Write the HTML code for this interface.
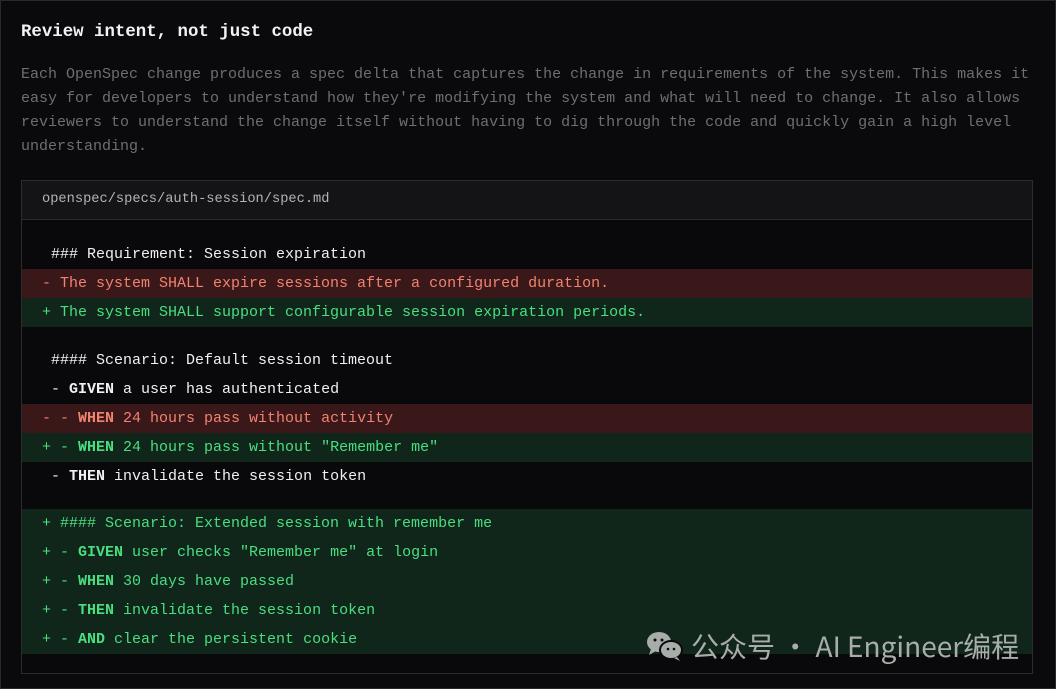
<!DOCTYPE html>
<html><head><meta charset="utf-8"><style>
body{margin:0;width:1056px;height:689px;background:#0a0a0c;overflow:hidden;font-family:"Liberation Mono",monospace;position:relative}
.frame{position:absolute;left:0;top:0;width:1054px;height:687px;border:1px solid #2a2a2e}
h1{position:absolute;left:21px;top:20px;margin:0;font-size:17.4px;font-weight:bold;color:#f2f2f2;line-height:26px}
p{position:absolute;left:21px;top:63px;margin:0;width:1040px;font-size:15px;line-height:24px;color:#6e6e74;white-space:nowrap}
.box{position:absolute;left:21px;top:180px;width:1010px;height:492px;border:1px solid #2c2c30;background:#09090b}
.hd{height:38px;background:#141416;border-bottom:1px solid #2c2c30;color:#b4b4b8;font-size:13.7px;line-height:38px;padding-left:20px}
.body{padding-top:20px}
.l{height:29px;line-height:29px;font-size:15px;color:#f0f0f0;white-space:pre;padding-left:20px}
.r{background:#3a1719;color:#f2836f}
.g{background:#10261a;color:#4ade80}
.gap{height:18px}
.gap2{height:19px}
b{font-weight:bold}
.wm{position:absolute;left:645px;top:626px;font-family:"Noto Sans CJK SC",sans-serif;font-size:28px;color:#a9ada9;line-height:40px;white-space:nowrap}
</style></head><body>
<div class="frame"></div>
<h1>Review intent, not just code</h1>
<p>Each OpenSpec change produces a spec delta that captures the change in requirements of the system. This makes it<br>easy for developers to understand how they're modifying the system and what will need to change. It also allows<br>reviewers to understand the change itself without having to dig through the code and quickly gain a high level<br>understanding.</p>
<div class="box">
<div class="hd">openspec/specs/auth-session/spec.md</div>
<div class="body">
<div class="l"> ### Requirement: Session expiration</div>
<div class="l r">- The system SHALL expire sessions after a configured duration.</div>
<div class="l g">+ The system SHALL support configurable session expiration periods.</div>
<div class="gap2"></div>
<div class="l"> #### Scenario: Default session timeout</div>
<div class="l"> - <b>GIVEN</b> a user has authenticated</div>
<div class="l r">- - <b>WHEN</b> 24 hours pass without activity</div>
<div class="l g">+ - <b>WHEN</b> 24 hours pass without "Remember me"</div>
<div class="l"> - <b>THEN</b> invalidate the session token</div>
<div class="gap"></div>
<div class="l g">+ #### Scenario: Extended session with remember me</div>
<div class="l g">+ - <b>GIVEN</b> user checks "Remember me" at login</div>
<div class="l g">+ - <b>WHEN</b> 30 days have passed</div>
<div class="l g">+ - <b>THEN</b> invalidate the session token</div>
<div class="l g">+ - <b>AND</b> clear the persistent cookie</div>
</div>
</div>
<div class="wm"><svg width="40" height="32" viewBox="0 0 40 32" style="vertical-align:-5px;margin-right:6px"><ellipse cx="14" cy="12" rx="12" ry="10" fill="#a9ada9"/><path d="M6 19 L4 25 L11 21Z" fill="#a9ada9"/><ellipse cx="26" cy="20" rx="11" ry="9" fill="#a9ada9" stroke="#0a0a0c" stroke-width="2"/><path d="M32 27 L35 31 L29 28Z" fill="#a9ada9"/><circle cx="10" cy="10" r="1.5" fill="#0a0a0c"/><circle cx="17" cy="10" r="1.5" fill="#0a0a0c"/><circle cx="23" cy="19" r="1.3" fill="#0a0a0c"/><circle cx="29" cy="19" r="1.3" fill="#0a0a0c"/></svg>公众号 · AI Engineer编程</div>
</body></html>
